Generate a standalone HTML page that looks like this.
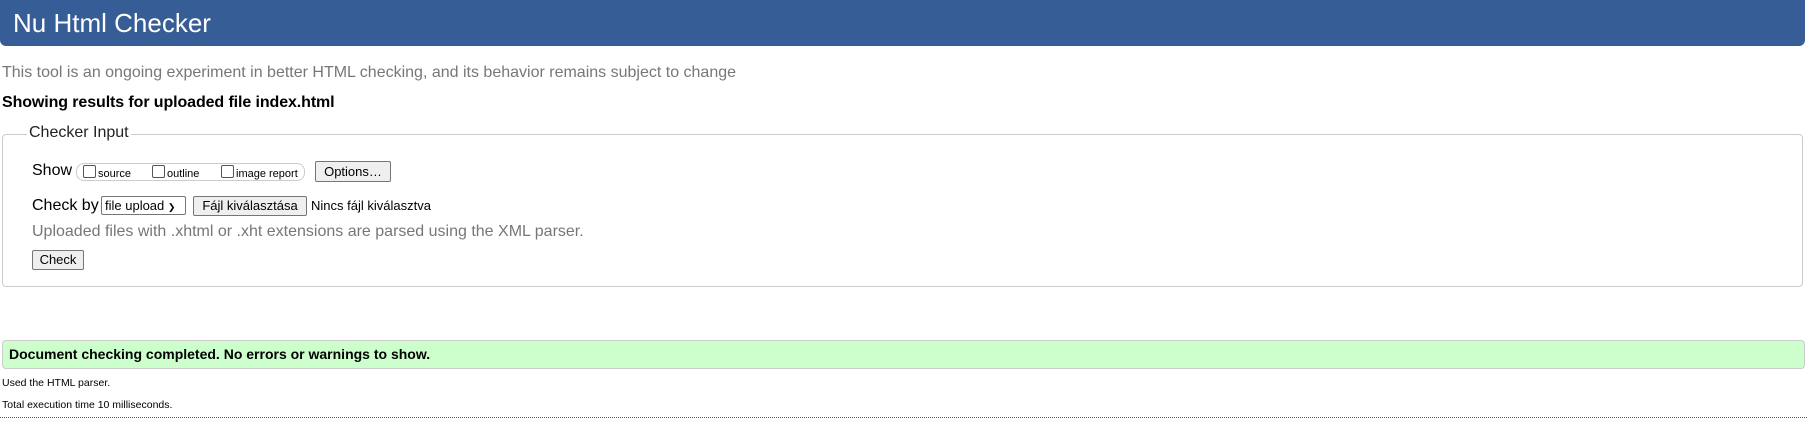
<!DOCTYPE html>
<html><head><meta charset="utf-8"><style>
body{margin:0;width:1807px;height:421px;position:relative;background:#fff;font-family:"Liberation Sans",Arial,sans-serif;overflow:hidden}
.a{position:absolute;white-space:nowrap}
.hdr{left:0;top:0;width:1805px;height:46px;background:#365d95;border-radius:0 0 6px 6px}
.btn{position:absolute;background:#efefef;border:1px solid #767676;border-radius:2px;font-size:13px;color:#000;text-align:center;box-sizing:border-box}
.cb{display:inline-block;width:11px;height:11px;border:1px solid #555;border-radius:2px;vertical-align:-1px;margin-right:2px;background:#fff}
</style></head><body>
<div class="a hdr"></div>
<div class="a" style="left:13px;top:7px;font-size:26px;color:#fff;line-height:32px">Nu Html Checker</div>
<div class="a" style="left:2px;top:64px;font-size:16px;color:#777;line-height:18px">This tool is an ongoing experiment in better HTML checking, and its behavior remains subject to change</div>
<div class="a" style="left:2px;top:94px;font-size:16px;font-weight:bold;color:#000;line-height:18px;letter-spacing:-0.1px">Showing results for uploaded file index.html</div>
<div class="a" style="left:2px;top:134px;width:1801px;height:153px;border:1px solid #ccc;border-radius:4px;box-sizing:border-box"></div>
<div class="a" style="left:27px;top:124px;padding:0 2px;background:#fff;font-size:16px;color:#222;line-height:18px">Checker Input</div>
<div class="a" style="left:32px;top:162px;font-size:16px;line-height:18px">Show</div>
<div class="a" style="left:76px;top:163px;width:229px;height:18px;border:1px solid #ccc;border-radius:8px;box-sizing:border-box"></div>
<div class="a" style="left:83px;top:165px;font-size:11px;line-height:14px"><span class="cb"></span>source</div>
<div class="a" style="left:152px;top:165px;font-size:11px;line-height:14px"><span class="cb"></span>outline</div>
<div class="a" style="left:221px;top:165px;font-size:11px;line-height:14px"><span class="cb"></span>image report</div>
<div class="btn" style="left:315px;top:161px;width:76px;height:21px;line-height:19px">Options…</div>
<div class="a" style="left:32px;top:197px;font-size:16px;line-height:18px">Check by</div>
<div class="a" style="left:101px;top:196px;width:85px;height:19px;border:1px solid #767676;border-radius:2px;box-sizing:border-box;font-size:13px;line-height:17px;padding-left:3px">file upload <span style="font-size:9px">&#10095;</span></div>
<div class="btn" style="left:193px;top:196px;width:114px;height:20px;line-height:18px">Fájl kiválasztása</div>
<div class="a" style="left:311px;top:198px;font-size:13px;line-height:16px">Nincs fájl kiválasztva</div>
<div class="a" style="left:32px;top:223px;font-size:16px;color:#777;line-height:18px">Uploaded files with .xhtml or .xht extensions are parsed using the XML parser.</div>
<div class="btn" style="left:32px;top:250px;width:52px;height:20px;line-height:18px">Check</div>
<div class="a" style="left:2px;top:340px;width:1803px;height:29px;background:#ccffcc;border:1px solid #ccc;border-radius:4px;box-sizing:border-box"></div>
<div class="a" style="left:9px;top:346px;font-size:14px;font-weight:bold;line-height:17px">Document checking completed. No errors or warnings to show.</div>
<div class="a" style="left:2px;top:377px;font-size:10.5px;line-height:13px">Used the HTML parser.</div>
<div class="a" style="left:2px;top:399px;font-size:10.5px;line-height:13px">Total execution time 10 milliseconds.</div>
<div class="a" style="left:0;top:417px;width:1807px;border-top:1px dotted #555"></div>
</body></html>
